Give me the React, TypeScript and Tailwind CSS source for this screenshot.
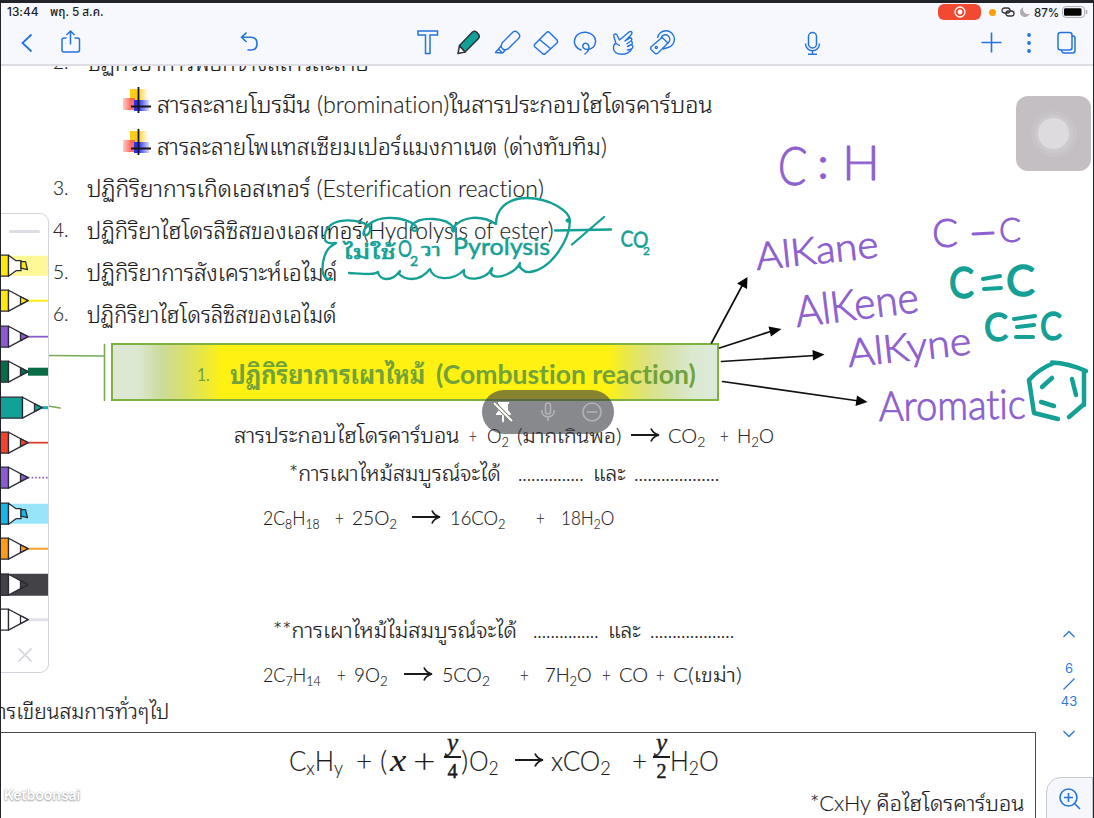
import { useLayoutEffect, useRef } from "react";
import type { ReactNode } from "react";

/** Text run that is stretched or condensed to the width of its own box. */
function Fit({ className, children }: { className: string; children: ReactNode }) {
  const outer = useRef<HTMLSpanElement>(null);
  const inner = useRef<HTMLSpanElement>(null);
  useLayoutEffect(() => {
    if (!outer.current || !inner.current) return;
    const natural = inner.current.offsetWidth;
    if (natural > 0) inner.current.style.transform = `scaleX(${outer.current.clientWidth / natural})`;
  });
  return (
    <span ref={outer} className={`block shrink-0 whitespace-nowrap ${className}`}>
      <span ref={inner} className="inline-block origin-left">{children}</span>
    </span>
  );
}

function Sub({ children }: { children: ReactNode }) {
  return <span className="relative top-[4px] text-[0.7em] leading-none">{children}</span>;
}

function Arrow({ className }: { className: string }) {
  return (
    <svg viewBox="0 0 29 16" className={`h-4 w-[29px] shrink-0 ${className}`} fill="none" stroke="#1b1b1d" strokeWidth="1.8">
      <path d="M0 8H27M20 1.500Q22 6.500 28 8Q22 9.500 20 14.500" />
    </svg>
  );
}

function Bullet() {
  return (
    <svg viewBox="0 0 28 26" className="mb-[8px] ml-[123px] h-[26px] w-7 shrink-0">
      <defs>
        <linearGradient id="by"><stop offset=".4" stopColor="#fdcb18" /><stop offset="1" stopColor="#fff9e4" /></linearGradient>
        <linearGradient id="br"><stop offset="0" stopColor="#ffc4bb" /><stop offset=".6" stopColor="#fb5a50" /></linearGradient>
        <linearGradient id="bb"><stop offset=".3" stopColor="#2930e8" /><stop offset="1" stopColor="#d9dbff" /></linearGradient>
      </defs>
      <rect x="7" y="2" width="17" height="12" fill="url(#by)" />
      <rect x="0" y="11" width="12" height="12" fill="url(#br)" opacity=".85" />
      <rect x="11" y="13" width="15" height="11" fill="url(#bb)" />
      <path d="M15.500 0V26M8 19.500H28" stroke="#17171d" strokeWidth="1.800" />
    </svg>
  );
}

function Item({ n, className, children }: { n: string; className: string; children: ReactNode }) {
  return (
    <div className="flex h-[42px] shrink-0 items-center">
      <span className="ml-[53px] w-[34px] text-[19px]">{n}</span>
      <Fit className={className}>{children}</Fit>
    </div>
  );
}

function Fraction({ top, bottom, className }: { top: string; bottom: string; className: string }) {
  return (
    <span className={`flex w-[17px] shrink-0 flex-col items-center font-['Liberation_Serif',serif] text-[25px] leading-[26px] font-normal ${className}`}>
      <i className="-mt-2 h-[26px] [-webkit-text-stroke:0.4px_#1b1b1d]">{top}</i>
      <span className="h-[1.5px] w-full bg-[#1b1b1d]" />
      <span className="h-6 text-[20px] [-webkit-text-stroke:0.5px_#1b1b1d]">{bottom}</span>
    </span>
  );
}

type PenSpec = { kind: "pen" | "marker" | "wide"; color: string; line: string; width: number; dash?: string };

const pens: PenSpec[] = [
  { kind: "marker", color: "#ffe90c", line: "#fff896", width: 20 },
  { kind: "pen", color: "#ffe90c", line: "#ffee12", width: 2 },
  { kind: "pen", color: "#8d5bd0", line: "#8d5bd0", width: 1.8 },
  { kind: "pen", color: "#086c47", line: "#086c47", width: 8 },
  { kind: "wide", color: "#12a196", line: "#21aaa8", width: 3 },
  { kind: "pen", color: "#f8432b", line: "#df3e35", width: 1.8 },
  { kind: "pen", color: "#8d5bd0", line: "#8d5bd0", width: 1.8, dash: "1.6 2" },
  { kind: "marker", color: "#17b8e6", line: "#98e4f8", width: 20 },
  { kind: "pen", color: "#ff9d17", line: "#f6a02d", width: 2 },
  { kind: "pen", color: "#434247", line: "#434247", width: 22 },
  { kind: "pen", color: "#ffffff", line: "#e0e0e8", width: 3 },
];

function Pen({ pen }: { pen: PenSpec }) {
  const s = pen.kind === "wide" ? 14 : 0;
  const start = pen.width > 15 ? 0 : 27 + s;
  return (
    <svg viewBox="0 -17.7 47 35.4" className="block h-[35.4px] w-[47px]" stroke="#2b2b36" strokeWidth="1.3" strokeLinejoin="round">
      <path d={`M${start} 0H47`} stroke={pen.line} strokeWidth={pen.width} strokeDasharray={pen.dash} />
      <rect x="-1" y="-10.5" width={8.5 + s} height="21" fill={pen.color} />
      {pen.kind === "marker" ? (
        <>
          <path d="M7.500-10.500L15-5H20V5H15L7.500 10.500Z" fill="#fff" />
          <path d="M20-4H24.500L26.500 4L20 2.500Z" fill={pen.color} />
        </>
      ) : (
        <g transform={`translate(${s} 0)`}>
          <path d="M7.500-10.500L27 0L7.500 10.500Z" fill="#fff" />
          <path d="M19.500-3.900L27 0L19.500 3.900Z" fill={pen.color} />
        </g>
      )}
    </svg>
  );
}

function Palette() {
  return (
    <aside className="flex h-[460px] w-[48px] flex-col overflow-hidden rounded-r-[9px] border border-l-0 border-[#d4d4dc] bg-white">
      <div className="flex h-[34px] shrink-0 items-center justify-center"><div className="h-[3px] w-[31px] rounded-full bg-[#dcdce4]" /></div>
      {pens.map((pen, i) => <Pen key={i} pen={pen} />)}
      <svg viewBox="0 0 14 14" className="mx-auto mt-[11px] size-[14px]" stroke="#d7d7dd" strokeWidth="1.7"><path d="M.5.5L13.5 13.5M13.5.5L.5 13.5" /></svg>
    </aside>
  );
}

function Header() {
  return (
    <header className="relative z-20 flex h-[63px] w-full shrink-0 flex-col border-b-2 border-[#dddde3] bg-[#f7f7fe]">
      <div className="flex h-[18px] items-center pl-[6px] font-['Inter','Noto_Sans_Thai',sans-serif] text-[11.5px] font-medium text-[#1c1c20]">
        <Fit className="mt-px w-[32px]">13:44</Fit>
        <Fit className="mt-px ml-[11px] w-[54px]">พฤ. 5 ส.ค.</Fit>
        <div className="ml-[834px] flex h-4 w-[43px] items-center justify-center rounded-[6px] bg-[#f24a32]">
          <svg viewBox="0 0 12 12" className="size-3"><circle cx="6" cy="6" r="5" fill="none" stroke="#fff" strokeWidth="1.3" /><circle cx="6" cy="6" r="2.4" fill="#fff" /></svg>
        </div>
        <div className="ml-2 size-[7px] rounded-full bg-[#ff9f0a]" />
        <svg viewBox="0 0 14 10" className="ml-[5px] h-[10px] w-[14px]" fill="none" stroke="#36363b" strokeWidth="1.3"><rect x="1" y="1" width="8" height="5" rx="2.5" /><rect x="5" y="4" width="8" height="5" rx="2.5" /></svg>
        <svg viewBox="0 0 10 10" className="ml-[5px] size-[10px]" fill="#acacb1"><path d="M3.200 0.300C1.300 1.200 0 3 0 5C0 7.800 2.200 10 5 10C7.200 10 9 8.700 9.700 6.800C6 8.200 2 5 3.200 0.300Z" /></svg>
        <Fit className="mt-px ml-[4px] w-[25px] text-[12px]">87%</Fit>
        <svg viewBox="0 0 26 12" className="ml-[3px] h-3 w-[26px]"><rect x=".6" y=".6" width="22" height="10.8" rx="3" fill="none" stroke="#aaaab0" /><rect x="2" y="2.2" width="17.5" height="7.6" rx="1.3" fill="#050506" /><path d="M24.5 4V8" stroke="#aaaab0" strokeWidth="1.5" /></svg>
      </div>
      <nav className="mt-2 flex h-[26px] items-center text-[#2474dc]">
        <svg viewBox="20 29 14 26" className="ml-[19px] h-[26px] w-[14px]" fill="none" stroke="currentColor" strokeWidth="1.8"><path d="M31.5 34.5L22.5 43L31.5 51.5" /></svg>
        <svg viewBox="60 29 22 26" className="ml-[26px] h-[26px] w-[22px]" fill="none" stroke="currentColor" strokeWidth="1.5"><path d="M66.5 38H64Q62 38 62 40V50Q62 52 64 52H77.500Q79.500 52 79.500 50V40Q79.500 38 77.500 38H74.500M70.500 44.500V31M66.500 35L70.500 31L74.500 35" /></svg>
        <svg viewBox="238 29 22 26" className="ml-[156px] h-[26px] w-[22px]" fill="none" stroke="currentColor" strokeWidth="1.6"><path d="M246.500 32.500L241.500 37.300L246.500 42M241.500 37.300H251Q257 37.500 257 43.500Q257 50 251 50H247.500" /></svg>
        <svg viewBox="416 29 24 26" className="ml-[156px] h-[26px] w-6" fill="none" stroke="currentColor" strokeWidth="1.5"><path d="M418 31H437.500V35H430V53.500H425.500V35H418Z" /></svg>
        <svg viewBox="455 29 28 26" className="ml-[15px] h-[26px] w-7" fill="none" stroke="#2d3338" strokeWidth="1.5" strokeLinejoin="round"><path d="M458 53.500L459.500 45.500L465 52Z" fill="#fff" /><path d="M459.500 45.500L472.500 32Q474.500 30.500 476.500 32L479 35Q480 37 478.500 38.500L465 52Z" fill="#12a196" /></svg>
        <svg viewBox="493 29 30 26" className="ml-[10px] h-[26px] w-[30px]" fill="none" stroke="currentColor" strokeWidth="1.4" strokeLinejoin="round"><path d="M502 43L513 32Q515 30.500 517 32L519 34Q520.500 36 519 38L508 49L504 50L501 47ZM501 46L498.500 49L502.500 53L505.500 50M498.500 49L495.500 52.500L502.500 53" /></svg>
        <svg viewBox="532 29 28 26" className="ml-[9px] h-[26px] w-7" fill="none" stroke="currentColor" strokeWidth="1.5" strokeLinejoin="round"><path d="M535 44L546.500 32.500Q548 31 549.500 32.500L557 40Q558 41.500 557 43L545.500 53.500Q544 55 542.500 53.500L535 47Q533.500 45.500 535 44ZM539.500 39.500L551 49" /></svg>
        <svg viewBox="572 29 28 26" className="ml-3 h-[26px] w-7" fill="none" stroke="currentColor" strokeWidth="1.5" strokeLinecap="round"><path d="M581 50C576 48.500 574 44 574.500 40.500C575.500 34 581 32 586 32.300C592 33 596 37 595.500 42C595.300 46 592 49.500 587.500 49.500C584 49.500 582.500 47.500 582.800 45.500C583.300 43 586.500 42.500 588 44.500C590.500 48 588 52 585 54" /></svg>
        <svg viewBox="610 29 26 26" className="ml-[10px] h-[26px] w-[26px]" fill="none" stroke="currentColor" strokeWidth="1.4" strokeLinejoin="round" strokeLinecap="round"><path d="M616 43.500L613.800 36.500Q613.500 34 615.500 34Q617 34 617.500 36L619.500 40L629 32Q631.500 30.500 632 33Q632 34 631 35L625 41L630 37.800Q632.500 38 631.500 40.500L627 43.800M631 41Q633.500 42.500 631.500 44.500L627.500 46.500M632 45Q634 47 631.500 49L627.500 50M631.500 49.500Q628 54.300 622 54.300Q614 54 613.500 48.500Q613.300 44 616 43.500L619.500 45.500" /></svg>
        <svg viewBox="647 29 28 26" className="ml-3 h-[26px] w-7" fill="none" stroke="currentColor" strokeWidth="1.4" strokeLinejoin="round"><path d="M656.500 38A8.500 8.500 0 1 1 667 47.500L662 49M660 38A4.500 4.500 0 1 1 666 43.500M661 37.500L667 43L657 53Q655 54.500 653.500 53L650 49.500Q649 48 650.500 46.500Z" /><circle cx="655.300" cy="47.500" r="1.100" /></svg>
        <svg viewBox="803 29 20 26" className="ml-[127px] h-[26px] w-5" fill="none" stroke="currentColor" strokeWidth="1.5"><rect x="808.500" y="32.500" width="8" height="15.500" rx="4" /><path d="M805.500 43.500C806 53 819 53 819.500 43.500M812.500 50.500V54M808 54.200H817" /></svg>
        <svg viewBox="980 29 24 26" className="ml-[157px] h-[26px] w-6" stroke="currentColor" strokeWidth="1.6"><path d="M981.500 42.500H1001.500M991.500 32.500V52.500" /></svg>
        <svg viewBox="1025 29 8 26" className="ml-[21px] h-[26px] w-2" fill="currentColor"><circle cx="1029" cy="35" r="1.900" /><circle cx="1029" cy="43" r="1.900" /><circle cx="1029" cy="51" r="1.900" /></svg>
        <svg viewBox="1056 29 22 26" className="ml-[23px] h-[26px] w-[22px]" fill="none" stroke="currentColor" strokeWidth="1.5"><rect x="1058" y="32.500" width="14" height="17.500" rx="2.500" /><path d="M1072 36H1073Q1075 36 1075 38.500V50.500Q1075 53 1072.500 53H1064Q1062 53 1061.500 50" /></svg>
      </nav>
    </header>
  );
}

function Ink() {
  return (
    <svg viewBox="0 0 1094 818" className="pointer-events-none absolute inset-0 h-[818px] w-[1094px]" fill="none" strokeLinecap="round" strokeLinejoin="round">
      <g stroke="#77a957" strokeWidth="1.6">
        <path d="M48 355.500L104 356M104.500 344.500V400.500M48 406L60 408" />
      </g>
      <g stroke="#101012" strokeWidth="1.7">
        <path d="M711.500 343L743 284M719.500 348L772 331M721.500 361.500L815 355.500M722.500 381.500L859 401" />
      </g>
      <g fill="#08080a">
        <path d="M747.500 277L747 289L737 283.500ZM781.500 329L771 336.500L768.500 326.500ZM824.500 354.500L813 360.500L812.500 350ZM867.500 402L855.500 406L857 395.500Z" />
      </g>
      <g stroke="#14a095" strokeWidth="2.300">
        <path d="M332 279C322 281 321 269 324 258C327 247 332 246 336 243C328 244 322 243 326 231C333 216 362 219 370 227C371 233 367 236 364 235C361 231 371 216 393 218C408 219 418 225 417 230C414 232 410 230 412 225C420 216 447 217 454 228C456 232 452 233 452 229C462 215 482 215 496 224C496 211 505 198 527 198C549 198 570 211 570 221C566 223 565 218 570 220C570 239 552 269 530 272C524 273 518 267 520 263C516 272 499 280 492 275C489 272 493 270 492 268C486 282 462 281 464 272L464 270C452 282 433 280 430 269C418 284 404 279 399 274L400 271C391 283 379 280 378 272C374 275 366 274 349 273" />
        <path d="M555 230.500L611 229.500M572 244.500L604 217" />
      </g>
      <g stroke="#14a095" strokeWidth="4.500">
        <path d="M1029 380C1037 371 1046 366 1054 363M1052 362.500C1065 363 1077 367 1086 371M1084 372L1084 405M1083 405L1069 417M1029 380L1034 413L1058 419M1042 387L1052 378M1072 379L1076 395M1041 402L1054 406" />
        <path d="M983 279L1000 276M984 289L1001 288M1014 319L1035 316M1017 327L1034 325M1016 337L1033 337" strokeWidth="4" />
      </g>
      <path d="M973 234L993 233" stroke="#8d5fd0" strokeWidth="3" />
      <g fill="#8d5fd0" stroke="#8d5fd0" strokeWidth=".9" className="font-['Lato',sans-serif] font-light" strokeLinejoin="round">
        <text x="777" y="184" fontSize="53" textLength="29" lengthAdjust="spacingAndGlyphs" transform="rotate(3 777 184)">C</text>
        <text x="818" y="178" fontSize="42" strokeWidth="2">:</text>
        <text x="842" y="180" fontSize="48" textLength="38" lengthAdjust="spacingAndGlyphs">H</text>
        <text x="757" y="270" fontSize="38" textLength="123" lengthAdjust="spacingAndGlyphs" transform="rotate(-6 757 270)">AlKane</text>
        <text x="797" y="327" fontSize="43" textLength="124" lengthAdjust="spacingAndGlyphs" transform="rotate(-7 797 327)">AlKene</text>
        <text x="849" y="367" fontSize="39" textLength="124" lengthAdjust="spacingAndGlyphs" transform="rotate(-6 849 367)">AlKyne</text>
        <text x="879" y="421" fontSize="41" textLength="147" lengthAdjust="spacingAndGlyphs" transform="rotate(-1 879 421)">Aromatic</text>
        <text x="932" y="247" fontSize="40" textLength="26" lengthAdjust="spacingAndGlyphs">C</text>
        <text x="999" y="242" fontSize="34" textLength="22" lengthAdjust="spacingAndGlyphs">C</text>
      </g>
      <g fill="#14a095" stroke="#14a095" strokeWidth="1.400" className="font-['Lato',sans-serif]">
        <text x="949" y="298" fontSize="42" textLength="25" lengthAdjust="spacingAndGlyphs">C</text>
        <text x="1006" y="296" fontSize="42" textLength="29" lengthAdjust="spacingAndGlyphs">C</text>
        <text x="984" y="341" fontSize="39" textLength="24" lengthAdjust="spacingAndGlyphs">C</text>
        <text x="1040" y="340" fontSize="39" textLength="22" lengthAdjust="spacingAndGlyphs">C</text>
      </g>
      <g fill="#14a095" stroke="#14a095" strokeWidth=".5" className="font-['Lato','Noto_Sans_Thai_Looped','Loma','Garuda',sans-serif]">
        <text x="343" y="259" fontSize="20" textLength="53" lengthAdjust="spacingAndGlyphs">ไม่ใช้</text>
        <text x="398" y="257" fontSize="23" textLength="14" lengthAdjust="spacingAndGlyphs">O</text>
        <text x="410" y="266" fontSize="14">2</text>
        <text x="421" y="256" fontSize="18" textLength="20" lengthAdjust="spacingAndGlyphs">วา</text>
        <text x="453" y="255" fontSize="24" textLength="97" lengthAdjust="spacingAndGlyphs">Pyrolysis</text>
        <text x="620" y="246" fontSize="22" textLength="28" lengthAdjust="spacingAndGlyphs" transform="rotate(4 620 246)">CO</text>
        <text x="643" y="255" fontSize="12">2</text>
      </g>
    </svg>
  );
}

export default function App() {
  return (
    <div className="relative flex h-[818px] w-[1094px] flex-col overflow-hidden border-t-[3px] border-r border-l border-[#232429] bg-white font-['Lato','Noto_Sans_Thai_Looped','Loma','Garuda',sans-serif] text-[#1b1b1d] [font-variant-ligatures:none]">
      <Header />
      <main className="-mt-[25px] -ml-px flex min-h-0 flex-1 flex-col text-[23px] leading-[42px] font-light [-webkit-text-stroke:0.15px_#1b1b1d]">
        <Item n="2." className="w-[282px]">ปฏิกิริยาการฟอกจางสีสารละลาย</Item>
        <div className="flex h-[42px] shrink-0 items-center"><Bullet /><Fit className="ml-[6px] w-[556px]">สารละลายโบรมีน (bromination)ในสารประกอบไฮโดรคาร์บอน</Fit></div>
        <div className="flex h-[42px] shrink-0 items-center"><Bullet /><Fit className="ml-[6px] w-[450px]">สารละลายโพแทสเซียมเปอร์แมงกาเนต (ด่างทับทิม)</Fit></div>
        <Item n="3." className="w-[457px]">ปฏิกิริยาการเกิดเอสเทอร์ (Esterification reaction)</Item>
        <Item n="4." className="w-[467px]">ปฏิกิริยาไฮโดรลิซิสของเอสเทอร์(Hydrolysis of ester)</Item>
        <Item n="5." className="w-[250px]">ปฏิกิริยาการสังเคราะห์เอไมด์</Item>
        <Item n="6." className="w-[250px]">ปฏิกิริยาไฮโดรลิซิสของเอไมด์</Item>
        <div className="mt-[8px] ml-[111px] flex h-[58px] w-[608px] shrink-0 items-center border-2 border-[#7fb13e] bg-[linear-gradient(90deg,#dce8d5_0%,#dce8d2_4%,#cadb9c_8%,#dbe06a_12%,#e9e742_15%,#fff112_18%,#fff112_82%,#e9e74a_85%,#dbe286_89%,#d6e4b4_93%,#dbe9cf_96%,#dceadb_100%)] pt-[3px] text-[26px] font-bold text-[#72a23c] [-webkit-text-stroke:0px]">
          <Fit className="ml-[84px] w-[13px] text-[18px] font-normal">1.</Fit>
          <Fit className="ml-[20px] w-[195px]">ปฏิกิริยาการเผาไหม้</Fit>
          <Fit className="ml-[11px] w-[260px]">(Combustion reaction)</Fit>
        </div>
        <div className="mt-[13px] flex h-[42px] shrink-0 items-center text-[20px]">
          <Fit className="ml-[234px] w-[226px] text-[21px]">สารประกอบไฮโดรคาร์บอน</Fit>
          <Fit className="ml-[9px] w-[8px]">+</Fit>
          <Fit className="ml-[10px] w-[22px]">O<Sub>2</Sub></Fit>
          <Fit className="ml-[8px] w-[104px]">(มากเกินพอ)</Fit>
          <Arrow className="ml-[10px]" />
          <Fit className="ml-[8px] w-[37px]">CO<Sub>2</Sub></Fit>
          <Fit className="ml-[15px] w-[9px]">+</Fit>
          <Fit className="ml-[8px] w-[37px]">H<Sub>2</Sub>O</Fit>
        </div>
        <div className="-mt-[4px] flex h-[42px] shrink-0 items-center text-[21px]">
          <Fit className="ml-[289px] w-[212px]">*การเผาไหม้สมบูรณ์จะได้</Fit>
          <Fit className="ml-[17px] w-[66px]">...............</Fit>
          <Fit className="ml-[9px] w-[33px]">และ</Fit>
          <Fit className="ml-[8px] w-[85px]">...................</Fit>
        </div>
        <div className="mt-[2px] flex h-[42px] shrink-0 items-center text-[20px]">
          <Fit className="ml-[263px] w-[57px]">2C<Sub>8</Sub>H<Sub>18</Sub></Fit>
          <Fit className="ml-[15px] w-[9px]">+</Fit>
          <Fit className="ml-[8px] w-[45px]">25O<Sub>2</Sub></Fit>
          <Arrow className="ml-[15px]" />
          <Fit className="ml-[9px] w-[55px]">16CO<Sub>2</Sub></Fit>
          <Fit className="ml-[31px] w-[9px]">+</Fit>
          <Fit className="ml-[16px] w-[53px]">18H<Sub>2</Sub>O</Fit>
        </div>
        <div className="mt-[71px] flex h-[42px] shrink-0 items-center text-[21px]">
          <Fit className="ml-[273px] w-[244px]">**การเผาไหม้ไม่สมบูรณ์จะได้</Fit>
          <Fit className="ml-[16px] w-[66px]">...............</Fit>
          <Fit className="ml-[9px] w-[33px]">และ</Fit>
          <Fit className="ml-[9px] w-[84px]">...................</Fit>
        </div>
        <div className="mt-[2px] flex h-[42px] shrink-0 items-center text-[20px]">
          <Fit className="ml-[263px] w-[58px]">2C<Sub>7</Sub>H<Sub>14</Sub></Fit>
          <Fit className="ml-[16px] w-[9px]">+</Fit>
          <Fit className="ml-[8px] w-[34px]">9O<Sub>2</Sub></Fit>
          <Arrow className="ml-[16px]" />
          <Fit className="ml-[9px] w-[48px]">5CO<Sub>2</Sub></Fit>
          <Fit className="ml-[30px] w-[9px]">+</Fit>
          <Fit className="ml-[16px] w-[47px]">7H<Sub>2</Sub>O</Fit>
          <Fit className="ml-[10px] w-[9px]">+</Fit>
          <Fit className="ml-[8px] w-[29px]">CO</Fit>
          <Fit className="ml-[8px] w-[9px]">+</Fit>
          <Fit className="ml-[8px] w-[69px]">C(เขม่า)</Fit>
        </div>
        <div className="-mt-[5px] flex h-[42px] shrink-0 items-center text-[22px]"><Fit className="-ml-[2px] w-[171px]">ารเขียนสมการทั่วๆไป</Fit></div>
        <section className="flex h-[100px] w-[1036px] shrink-0 flex-col border-t-[1.5px] border-r-[1.5px] border-[#4b4b4e]">
          <div className="flex h-[54px] shrink-0 items-center text-[28px]">
            <Fit className="ml-[289px] w-[54px]">C<Sub>x</Sub>H<Sub>y</Sub></Fit>
            <Fit className="ml-[13px] w-[16px]">+</Fit>
            <Fit className="ml-[8px] w-[7px]">(</Fit>
            <Fit className="ml-[3px] w-[16px] font-['Liberation_Serif',serif] text-[32px] italic">x</Fit>
            <Fit className="ml-[7px] w-[23px] text-[34px]">+</Fit>
            <Fraction top="y" bottom="4" className="ml-[8px]" />
            <Fit className="w-[7px]">)</Fit>
            <Fit className="ml-px w-[30px]">O<Sub>2</Sub></Fit>
            <Arrow className="ml-[16px]" />
            <Fit className="ml-[7px] w-[60px]">xCO<Sub>2</Sub></Fit>
            <Fit className="ml-[21px] w-[15px]">+</Fit>
            <Fraction top="y" bottom="2" className="ml-[6px]" />
            <Fit className="w-[49px]">H<Sub>2</Sub>O</Fit>
          </div>
          <div className="-mt-[5px] flex h-[42px] shrink-0 items-center text-[21px]"><Fit className="ml-[810px] w-[215px]">*CxHy คือไฮโดรคาร์บอน</Fit></div>
        </section>
      </main>
      <div className="absolute -top-[3px] -left-px">
        <div className="relative h-[818px] w-[1094px]">
          <Ink />
          <div className="absolute top-[213px] left-px"><Palette /></div>
          <div className="absolute top-[390px] left-[482px] flex h-[44px] w-[132px] items-center rounded-full bg-[#393a41]/60">
            <svg viewBox="0 0 20 22" className="ml-[11px] h-[22px] w-5" fill="#fff"><path d="M5 1H16V3H15V9L18 13V14H11V20L10 22L9 20V14H3V13L6 9V3H5Z" /><path d="M0 1L19 20" stroke="#7d7f70" strokeWidth="4" /><path d="M1 2L19 20" stroke="#fff" strokeWidth="2" /></svg>
            <svg viewBox="0 0 16 20" className="ml-[27px] h-5 w-4" fill="none" stroke="#b2b3b6" strokeWidth="1.600"><rect x="5.500" y="1" width="5" height="11" rx="2.500" /><path d="M1.500 8C2 17 14 17 14.500 8M8 15V19" /></svg>
            <svg viewBox="0 0 20 20" className="ml-[26px] size-5" fill="none" stroke="#b2b3b6" strokeWidth="1.600"><circle cx="10" cy="10" r="9" /><path d="M5 10H15" /></svg>
          </div>
          <div className="absolute top-[96px] left-[1016px] flex size-[75px] items-center justify-center rounded-[12px] bg-[#c3bfc2]">
            <div className="flex size-[46px] items-center justify-center rounded-full bg-[#c7c3c6]">
              <div className="flex size-[38px] items-center justify-center rounded-full bg-[#cdcacd]"><div className="size-[31px] rounded-full bg-[#dddbde]" /></div>
            </div>
          </div>
          <div className="absolute top-[630px] left-[1057px] flex w-6 flex-col items-center font-['Inter',sans-serif] text-[13px] leading-[16px] text-[#2e79d4]">
            <svg viewBox="0 0 12 8" className="h-2 w-3" fill="none" stroke="currentColor" strokeWidth="1.400"><path d="M.5 7L6 1.500L11.500 7" /></svg>
            <span className="mt-[22px]">6</span>
            <svg viewBox="0 0 12 12" className="mt-[2px] size-3" stroke="currentColor" strokeWidth="1.300"><path d="M.5 11.500L11.500.5" /></svg>
            <span className="mt-[3px]">43</span>
            <svg viewBox="0 0 12 8" className="mt-[21px] h-2 w-3" fill="none" stroke="currentColor" strokeWidth="1.400"><path d="M.5 1L6 6.500L11.500 1" /></svg>
          </div>
          <div className="absolute top-[777px] left-[1046px] flex h-[50px] w-[47px] justify-center rounded-tl-[15px] border border-[#c7c7ce] bg-[#f6f7fd] pt-[10px]">
            <svg viewBox="0 0 22 22" className="size-[22px]" fill="none" stroke="#2474dc" strokeWidth="1.600"><circle cx="9.500" cy="9.500" r="8.500" /><path d="M15.500 15.500L21 21M5 9.500H14M9.500 5V14" /></svg>
          </div>
          <div className="absolute top-[786px] left-[4px] font-['Inter',sans-serif] text-[14px] leading-[18px] font-semibold text-white [text-shadow:0_1px_2px_#99999d,0_0_1px_#aaaaad]"><Fit className="w-[76px]">Ketboonsai</Fit></div>
        </div>
      </div>
    </div>
  );
}
